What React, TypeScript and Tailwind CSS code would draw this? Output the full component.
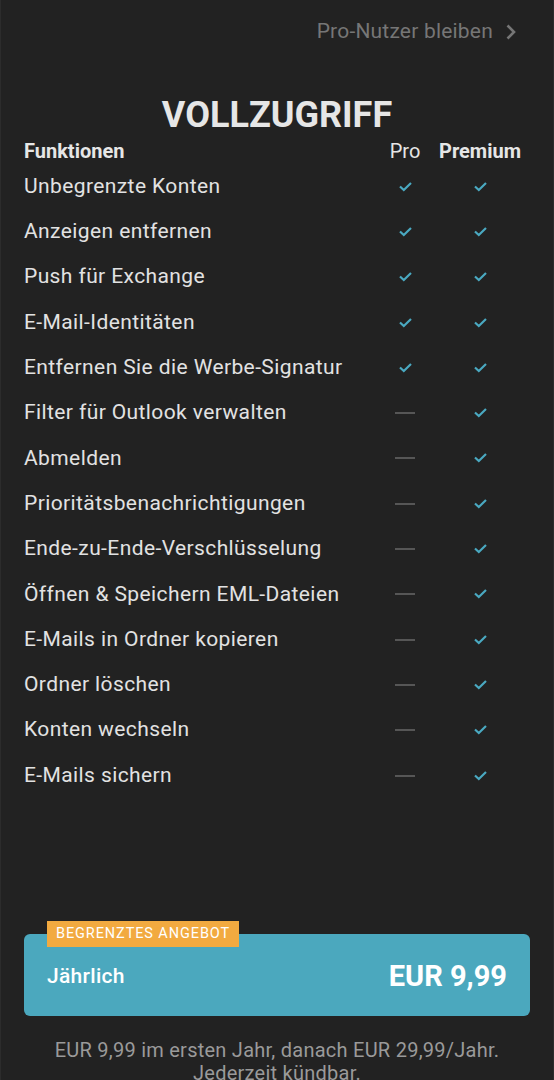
const features: { name: string; pro: boolean }[] = [
  { name: "Unbegrenzte Konten", pro: true },
  { name: "Anzeigen entfernen", pro: true },
  { name: "Push für Exchange", pro: true },
  { name: "E-Mail-Identitäten", pro: true },
  { name: "Entfernen Sie die Werbe-Signatur", pro: true },
  { name: "Filter für Outlook verwalten", pro: false },
  { name: "Abmelden", pro: false },
  { name: "Prioritätsbenachrichtigungen", pro: false },
  { name: "Ende-zu-Ende-Verschlüsselung", pro: false },
  { name: "Öffnen & Speichern EML-Dateien", pro: false },
  { name: "E-Mails in Ordner kopieren", pro: false },
  { name: "Ordner löschen", pro: false },
  { name: "Konten wechseln", pro: false },
  { name: "E-Mails sichern", pro: false },
];

function Check() {
  return (
    <svg className="w-[13px] h-[10px]" viewBox="0 0 13 10" fill="none" stroke="#4aa9c1" strokeWidth="2.2" strokeLinecap="square">
      <path d="M1.8 5.2 4.8 8 11.2 1.8" />
    </svg>
  );
}

function Dash() {
  return <div className="w-[20px] h-[2px] bg-[#565656]"></div>;
}

export default function App() {
  return (
    <div
      className="w-[554px] h-[1080px] overflow-hidden bg-[#222222] border-x border-[#2c2c2c] flex flex-col"
      style={{ fontFamily: "Roboto, 'Noto Sans', sans-serif" }}
    >
      <div className="h-[64px] shrink-0 flex items-center justify-end pr-[36px] gap-[12px] text-[21px] text-[#767676] tracking-[0.2px]">
        <span>Pro-Nutzer bleiben</span>
        <svg className="w-[12px] h-[16px]" viewBox="0 0 12 16" fill="none" stroke="#767676" strokeWidth="2.6">
          <path d="M2.5 1.5 9 8l-6.5 6.5" />
        </svg>
      </div>

      <h1 className="mt-[31px] h-[40px] shrink-0 leading-[40px] text-center text-[36px] font-bold text-[#e6e6e6]">VOLLZUGRIFF</h1>

      <div className="mt-[4px] h-[24px] shrink-0 flex items-center pl-[23px] pr-[28px] text-[20px] text-[#e6e6e6]">
        <span className="flex-1 font-bold">Funktionen</span>
        <span className="w-[60px] text-center">Pro</span>
        <span className="w-[90px] text-center font-bold">Premium</span>
      </div>

      <div className="mt-[1px] flex flex-col shrink-0">
        {features.map((f) => (
          <div key={f.name} className="h-[45.3px] flex items-center pl-[23px] pr-[28px]">
            <span className="flex-1 text-[21px] text-[#e2e2e2] tracking-[0.4px]">{f.name}</span>
            <div className="w-[60px] flex justify-center">{f.pro ? <Check /> : <Dash />}</div>
            <div className="w-[90px] flex justify-center">
              <Check />
            </div>
          </div>
        ))}
      </div>

      <div className="relative shrink-0 mt-[136px] mx-[23px] h-[82px] rounded-[6px] bg-[#4ba8be] flex items-center justify-between pl-[23px] pr-[23px] pt-[4px]">
        <div className="absolute left-[23px] top-[-13px] h-[26px] px-[9px] bg-[#f2aa40] flex items-center text-[14.5px] tracking-[0.9px] text-white">
          BEGRENZTES ANGEBOT
        </div>
        <span className="text-[21px] font-medium text-white tracking-[0.3px]">Jährlich</span>
        <span className="text-[29px] font-bold text-white">EUR 9,99</span>
      </div>

      <div className="mt-[23px] shrink-0 text-center text-[20px] leading-[23px] tracking-[0.25px] text-[#9a9a9a]">
        EUR 9,99 im ersten Jahr, danach EUR 29,99/Jahr.
        <br />
        Jederzeit kündbar.
      </div>
    </div>
  );
}
